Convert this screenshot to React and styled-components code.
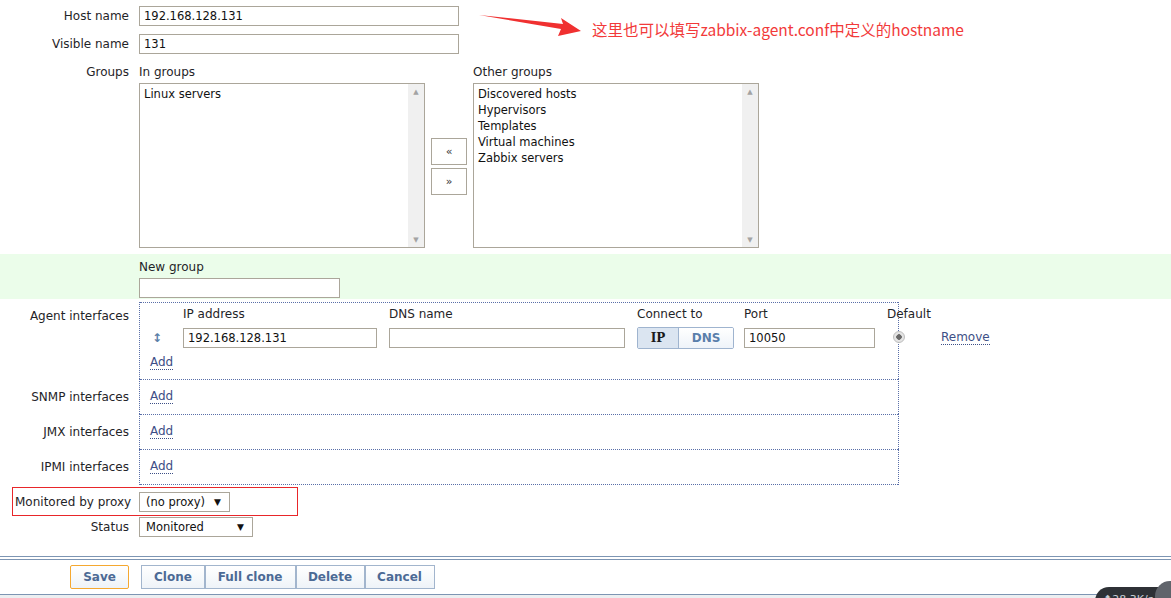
import React from "react";
import styled, { createGlobalStyle, css } from "styled-components";

const GlobalStyle = createGlobalStyle`
  html, body {
    margin: 0;
    padding: 0;
    background: #fff;
  }
  body {
    font-family: "DejaVu Sans", Verdana, sans-serif;
    font-size: 12px;
    color: #1f2428;
    overflow: hidden;
  }
`;

const inGroups = ["Linux servers"];
const otherGroups = [
  "Discovered hosts",
  "Hypervisors",
  "Templates",
  "Virtual machines",
  "Zabbix servers",
];

const actions = [
  { t: "Clone", w: 64 },
  { t: "Full clone", w: 91 },
  { t: "Delete", w: 69 },
  { t: "Cancel", w: 70 },
];

const App = () => {
  return (
    <Page>
      <GlobalStyle />
      <Form>
        <Row $mb={8}>
          <Label>Host name</Label>
          <TextInput $w={320} defaultValue="192.168.128.131" />
        </Row>
        <Row $mb={11}>
          <Label>Visible name</Label>
          <TextInput $w={320} defaultValue="131" />
        </Row>
        <Row $mb={6} $top>
          <Label>Groups</Label>
          <GroupsGrid>
            <Caption>In groups</Caption>
            <span />
            <Caption>Other groups</Caption>
            <ListBox items={inGroups} />
            <MoveButtons>
              <MoveButton>«</MoveButton>
              <MoveButton>»</MoveButton>
            </MoveButtons>
            <ListBox items={otherGroups} />
          </GroupsGrid>
        </Row>

        <GreenBand>
          <Row $top>
            <Label />
            <div>
              <Caption>New group</Caption>
              <TextInput $w={201} />
            </div>
          </Row>
        </GreenBand>

        <Row $top>
          <Label $pt={7}>Agent interfaces</Label>
          <Interfaces>
            <IfaceSection $h={77}>
              <IfaceHead>
                <Cell $w={43} />
                <Cell $w={206}>IP address</Cell>
                <Cell $w={248}>DNS name</Cell>
                <Cell $w={107}>Connect to</Cell>
                <Cell $w={143}>Port</Cell>
                <Cell $w={50}>Default</Cell>
              </IfaceHead>
              <IfaceRow>
                <Cell $w={43}>
                  <DragHandle>↕</DragHandle>
                </Cell>
                <Cell $w={206}>
                  <TextInput $w={194} defaultValue="192.168.128.131" />
                </Cell>
                <Cell $w={248}>
                  <TextInput $w={236} />
                </Cell>
                <Cell $w={107}>
                  <Segmented>
                    <SegButton $active>IP</SegButton>
                    <SegButton>DNS</SegButton>
                  </Segmented>
                </Cell>
                <Cell $w={143}>
                  <TextInput $w={131} defaultValue="10050" />
                </Cell>
                <Cell $w={54}>
                  <Radio />
                </Cell>
                <LinkText>Remove</LinkText>
              </IfaceRow>
              <AddLink $mt={7}>Add</AddLink>
            </IfaceSection>
          </Interfaces>
        </Row>
        {["SNMP interfaces", "JMX interfaces", "IPMI interfaces"].map((t, i) => (
          <Row key={t}>
            <Label>{t}</Label>
            <Interfaces>
              <IfaceSection $h={35} $center $last={i === 2}>
                <AddLink>Add</AddLink>
              </IfaceSection>
            </Interfaces>
          </Row>
        ))}

        <Marked>
          <Label $w={114}>Monitored by proxy</Label>
          <Select $w={91}>
            <span>(no proxy)</span>
            <Caret>▼</Caret>
          </Select>
        </Marked>
        <Row>
          <Label>Status</Label>
          <Select $w={114}>
            <span>Monitored</span>
            <Caret>▼</Caret>
          </Select>
        </Row>
      </Form>

      <Footer>
        <FooterBar>
          <ActionButton $primary $w={59}>
            Save
          </ActionButton>
          <ButtonGroup>
            {actions.map((a) => (
              <ActionButton key={a.t} $w={a.w} $grouped>
                {a.t}
              </ActionButton>
            ))}
          </ButtonGroup>
        </FooterBar>
        <FooterFill />
      </Footer>

      <Note>
        <svg width="104" height="24" viewBox="0 0 104 24">
          <path d="M0 1 L84 10 L82 4 L102 17 L79 22 L82 15 Z" fill="#f03030" />
        </svg>
        <NoteText>这里也可以填写zabbix-agent.conf中定义的hostname</NoteText>
      </Note>
      <SpeedPill>
        <SpeedText>⬆28.3K/s</SpeedText>
        <SpeedKnob />
      </SpeedPill>
    </Page>
  );
};

const ListBox = ({ items }) => (
  <ListFrame>
    <ListItems>
      {items.map((it) => (
        <div key={it}>{it}</div>
      ))}
    </ListItems>
    <ScrollTrack>
      <ScrollArrow>▲</ScrollArrow>
      <ScrollArrow>▼</ScrollArrow>
    </ScrollTrack>
  </ListFrame>
);

export default App;

const Page = styled.div`
  position: relative;
  width: 1171px;
  height: 598px;
  padding-top: 6px;
  box-sizing: border-box;
  display: flex;
  flex-direction: column;
  overflow: hidden;
`;

const Form = styled.div`
  display: flex;
  flex-direction: column;
`;

const Row = styled.div`
  display: flex;
  align-items: ${(p) => (p.$top ? "flex-start" : "center")};
  margin-bottom: ${(p) => p.$mb || 0}px;
`;

const Label = styled.div`
  width: ${(p) => p.$w || 129}px;
  flex-shrink: 0;
  padding-right: 10px;
  padding-top: ${(p) => p.$pt || 0}px;
  text-align: right;
  white-space: nowrap;
  color: #1f2428;
`;

const TextInput = styled.input`
  box-sizing: border-box;
  width: ${(p) => p.$w}px;
  height: 20px;
  border: 1px solid #aba69a;
  padding: 0 4px;
  font: inherit;
  font-size: 11.5px;
  color: #111;
  background: #fff;
  outline: none;
`;

const GroupsGrid = styled.div`
  display: grid;
  grid-template-columns: 286px 48px 286px;
  row-gap: 4px;
`;

const Caption = styled.div`
  height: 14px;
  line-height: 14px;
`;

const ListFrame = styled.div`
  box-sizing: border-box;
  height: 165px;
  border: 1px solid #aba69a;
  display: flex;
  background: #fff;
`;

const ListItems = styled.div`
  flex: 1;
  padding: 2px 4px;
  font-size: 11.5px;
  line-height: 16px;
  color: #111;
`;

const ScrollTrack = styled.div`
  width: 16px;
  background: #f0f0f0;
  display: flex;
  flex-direction: column;
  justify-content: space-between;
  align-items: center;
  padding: 4px 0 3px;
`;

const ScrollArrow = styled.span`
  font-size: 7px;
  color: #a3a3a3;
`;

const MoveButtons = styled.div`
  display: flex;
  flex-direction: column;
  align-items: center;
  justify-content: center;
  gap: 3px;
  padding-top: 2px;
`;

const MoveButton = styled.div`
  box-sizing: border-box;
  width: 36px;
  height: 27px;
  border: 1px solid #aba69a;
  display: flex;
  align-items: center;
  justify-content: center;
  font-size: 11px;
  color: #333;
  background: #fff;
`;

const GreenBand = styled.div`
  background: #ebfdea;
  padding: 6px 0 1px;
  margin-bottom: 3px;
  ${Caption} {
    margin-bottom: 4px;
  }
`;

const Interfaces = styled.div`
  width: 760px;
  box-sizing: border-box;
  border-left: 1px dotted #5a6fa8;
  border-right: 1px dotted #5a6fa8;
`;

const IfaceSection = styled.div`
  box-sizing: border-box;
  height: ${(p) => p.$h}px;
  border-top: 1px dotted #5a6fa8;
  padding-left: 10px;
  ${(p) =>
    p.$last &&
    css`
      border-bottom: 1px dotted #5a6fa8;
      height: ${p.$h + 1}px;
    `}
  ${(p) =>
    p.$center &&
    css`
      display: flex;
      align-items: center;
    `}
`;

const IfaceHead = styled.div`
  display: flex;
  margin-left: -10px;
  padding-top: 3px;
  height: 16px;
  line-height: 16px;
  white-space: nowrap;
`;

const IfaceRow = styled.div`
  display: flex;
  align-items: center;
  margin-left: -10px;
  margin-top: 5px;
  height: 22px;
  white-space: nowrap;
`;

const Cell = styled.div`
  width: ${(p) => p.$w}px;
  flex-shrink: 0;
`;

const DragHandle = styled.span`
  display: inline-block;
  margin-left: 12px;
  color: #5b7fa8;
  font-weight: bold;
  font-size: 12px;
`;

const Segmented = styled.div`
  display: inline-flex;
  height: 22px;
  border: 1px solid #9fb4cf;
  border-radius: 2px;
  box-sizing: border-box;
  overflow: hidden;
`;

const SegButton = styled.div`
  display: flex;
  align-items: center;
  justify-content: center;
  font-weight: bold;
  font-size: 12px;
  width: ${(p) => (p.$active ? 40 : 54)}px;
  color: ${(p) => (p.$active ? "#1a1a1a" : "#5a7fab")};
  background: ${(p) =>
    p.$active ? "#dbe5f1" : "linear-gradient(#ffffff, #eef3f9)"};
  border-right: ${(p) => (p.$active ? "1px solid #9fb4cf" : "none")};
  font-family: ${(p) =>
    p.$active ? '"DejaVu Serif", serif' : '"DejaVu Sans", sans-serif'};
`;

const Radio = styled.span`
  display: inline-block;
  width: 10px;
  height: 10px;
  border-radius: 50%;
  background: radial-gradient(circle, #6a6a6a 0 2.5px, #e4e4e4 3px);
  border: 1px solid #bdbdbd;
  margin-left: 6px;
`;

const LinkText = styled.span`
  color: #3d4f86;
  border-bottom: 1px dotted #3d4f86;
  line-height: 13px;
`;

const AddLink = styled(LinkText)`
  display: inline-block;
  margin-top: ${(p) => p.$mt || 0}px;
`;

const Marked = styled.div`
  display: flex;
  align-items: center;
  box-sizing: border-box;
  margin: 2px 0 1px 12px;
  width: 286px;
  height: 29px;
  border: 1px solid #e8262a;
  ${Label} {
    padding-left: 2px;
  }
`;

const Select = styled.div`
  box-sizing: border-box;
  width: ${(p) => p.$w}px;
  height: 20px;
  border: 1px solid #aba69a;
  display: flex;
  align-items: center;
  justify-content: space-between;
  padding: 0 8px 0 6px;
  font-size: 11.5px;
  color: #111;
  background: #fff;
`;

const Caret = styled.span`
  font-size: 9px;
  color: #111;
`;

const Footer = styled.div`
  flex: 1;
  display: flex;
  flex-direction: column;
  margin-top: 19px;
  border-top: 1px solid #7d95b3;
  padding-top: 2px;
`;

const FooterBar = styled.div`
  border-top: 1px solid #7d95b3;
  border-bottom: 1px solid #7d95b3;
  height: 36px;
  display: flex;
  align-items: center;
  padding: 0 0 1px 70px;
  gap: 12px;
  box-sizing: border-box;
  background: #fff;
`;

const FooterFill = styled.div`
  flex: 1;
  background: #eceff1;
`;

const ButtonGroup = styled.div`
  display: flex;
`;

const ActionButton = styled.div`
  box-sizing: border-box;
  width: ${(p) => p.$w}px;
  height: 24px;
  display: flex;
  align-items: center;
  justify-content: center;
  font-weight: bold;
  font-size: 12px;
  color: #4c6a95;
  background: linear-gradient(#ffffff, #eef3f8);
  border: 1px solid ${(p) => (p.$primary ? "#f5a830" : "#a2b5cd")};
  border-radius: 2px;
  ${(p) =>
    p.$grouped &&
    css`
      border-radius: 0;
      & + & {
        border-left: none;
        box-shadow: inset 1px 0 0 #a2b5cd;
      }
    `}
`;

const Note = styled.div`
  position: absolute;
  left: 479px;
  top: 14px;
  display: flex;
  align-items: flex-start;
  gap: 9px;
`;

const NoteText = styled.span`
  margin-top: 4px;
  font-family: "Noto Sans CJK SC", "DejaVu Sans", sans-serif;
  font-size: 15.5px;
  color: #f23a3a;
  white-space: nowrap;
`;

const SpeedPill = styled.div`
  position: absolute;
  left: 1095px;
  top: 587px;
  width: 100px;
  height: 28px;
  border-radius: 14px;
  background: #2e3136;
  box-sizing: border-box;
  padding: 5px 0 0 8px;
`;

const SpeedText = styled.span`
  font-size: 11px;
  color: #c7cdd4;
`;

const SpeedKnob = styled.span`
  position: absolute;
  left: 60px;
  top: -6px;
  width: 30px;
  height: 30px;
  border-radius: 50%;
  background: #60646b;
`;
